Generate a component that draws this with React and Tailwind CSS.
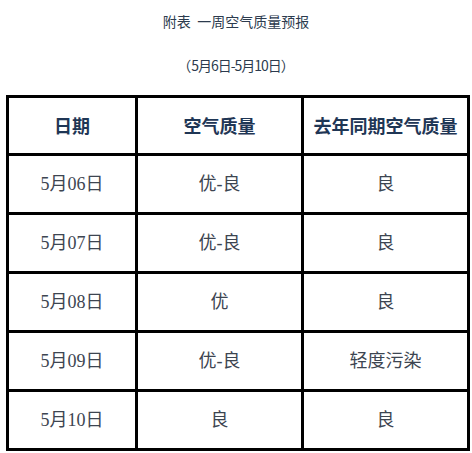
import React from 'react';

const rows = [
  ['5月06日', '优-良', '良'],
  ['5月07日', '优-良', '良'],
  ['5月08日', '优', '良'],
  ['5月09日', '优-良', '轻度污染'],
  ['5月10日', '良', '良'],
];

const font = { fontFamily: '"Liberation Serif", "Noto Sans CJK SC", serif' };
const cjk = { fontFamily: '"Noto Sans CJK SC", sans-serif' };

export default function App() {
  return (
    <div className="w-[472px] h-[453px] bg-white overflow-hidden" style={font}>
      {/* Title */}
      <div className="pt-[11px] h-[20px] box-content text-center text-[14px] leading-[20px] text-[#2c3b4e]" style={cjk}>
        附表&nbsp; 一周空气质量预报
      </div>
      <div className="mt-[24px] h-[20px] text-center text-[14px] leading-[20px] text-[#2c3b4e]" style={cjk}>
        <span className="inline-block w-[14px] text-right">（</span>
        <span className="tracking-[-1px]">5月6日-5月10日</span>
        <span className="inline-block w-[14px] text-left">）</span>
      </div>

      {/* Table */}
      <table className="ml-[6px] mt-[20px] w-[461px] border-collapse border-2 border-black table-fixed">
        <colgroup>
          <col className="w-[129px]" />
          <col className="w-[166px]" />
          <col className="w-[166px]" />
        </colgroup>
        <thead>
          <tr className="h-[58px]">
            {['日期', '空气质量', '去年同期空气质量'].map(h => (
              <th key={h} className="border-[3px] border-black text-center text-[18px] font-bold text-[#1f3655] p-0" style={cjk}>
                {h}
              </th>
            ))}
          </tr>
        </thead>
        <tbody>
          {rows.map(r => (
            <tr key={r[0]} className="h-[59px]">
              {r.map((c, i) => (
                <td key={i} className="border-[3px] border-black text-center text-[18px] text-[#3d4551] p-0">
                  {c}
                </td>
              ))}
            </tr>
          ))}
        </tbody>
      </table>
    </div>
  );
}
